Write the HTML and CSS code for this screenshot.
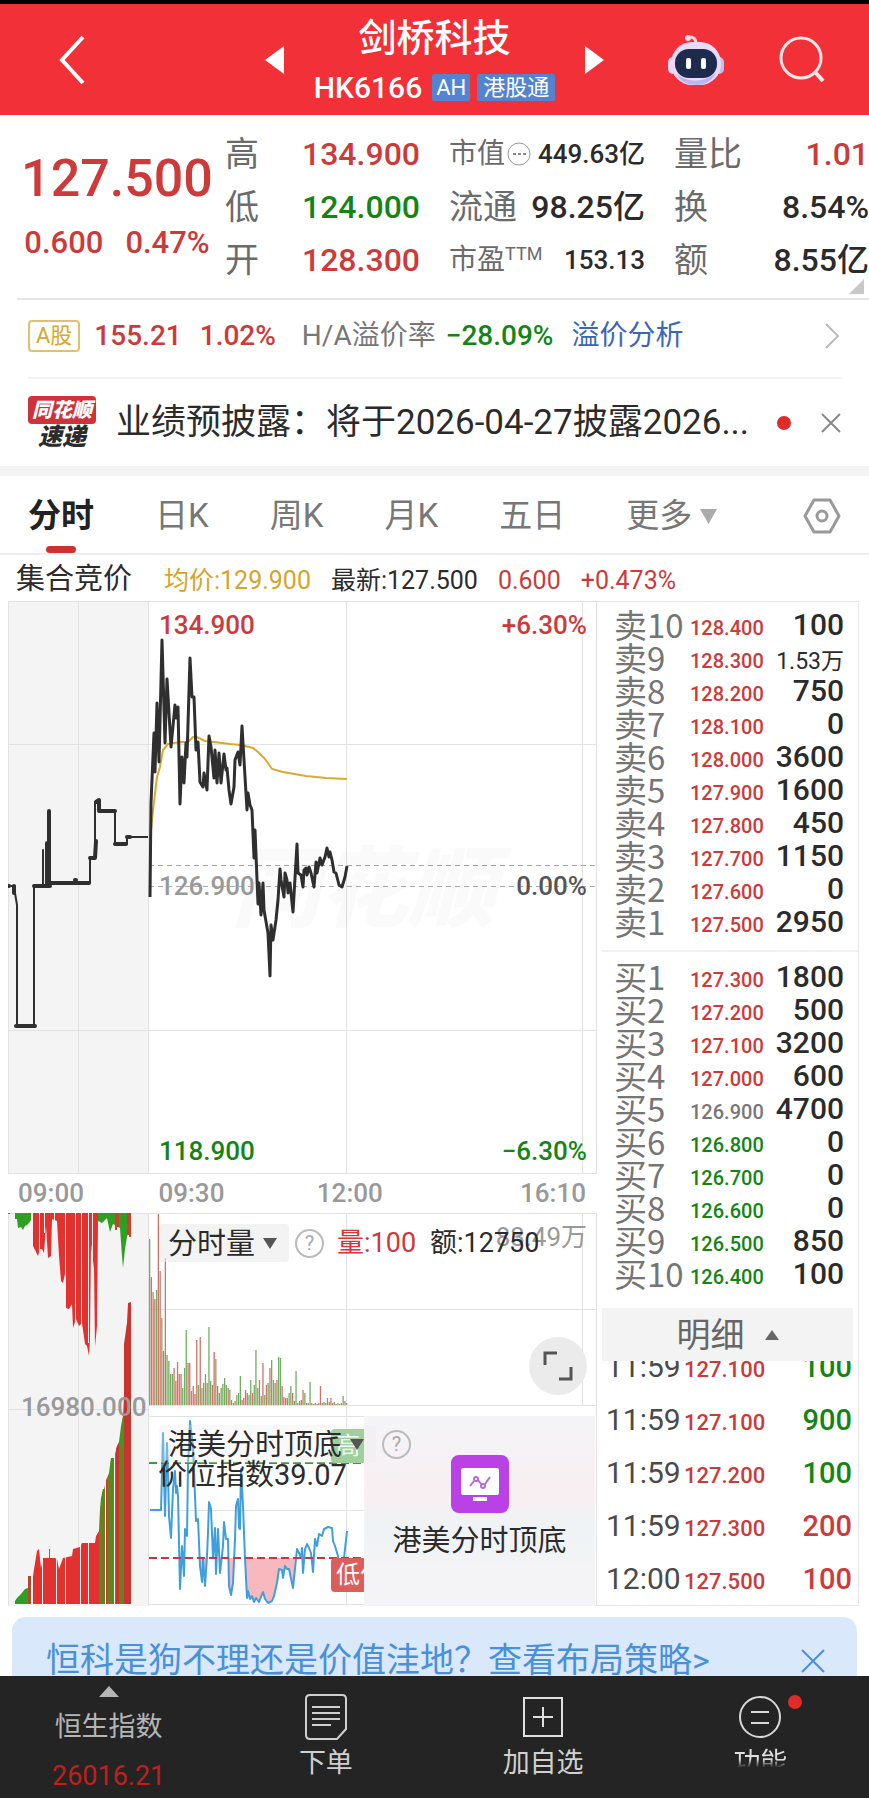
FILE: index.html
```html
<!DOCTYPE html>
<html lang="zh-CN">
<head>
    <meta charset="UTF-8">
    <meta name="viewport" content="width=device-width, initial-scale=1.0">
    <title>剑桥科技 HK6166</title>
    <link rel="stylesheet" href="styles.css">
</head>
<body>
    <header class="topbar">
        <button class="icon-btn back" aria-label="返回">
            <svg width="28" height="50" viewBox="0 0 28 50"><path d="M25 2L4 25l21 23" fill="none" stroke="#fff" stroke-width="4"/></svg>
        </button>
        <div class="switcher">
            <button class="icon-btn" aria-label="上一只"><svg width="19" height="28" viewBox="0 0 19 28"><path d="M19 0v28L0 14z" fill="#fff"/></svg></button>
            <div class="stock">
                <h1>剑桥科技</h1>
                <div class="code"><span>HK6166</span><span class="tag">AH</span><span class="tag tag-wide">港股通</span></div>
            </div>
            <button class="icon-btn" aria-label="下一只"><svg width="19" height="28" viewBox="0 0 19 28"><path d="M0 0v28l19-14z" fill="#fff"/></svg></button>
        </div>
        <div class="top-actions">
            <button class="icon-btn" aria-label="智能助手">
                <svg width="56" height="52" viewBox="0 0 56 52">
                    <path d="M20 3q8-1 8 7" fill="none" stroke="#fbd0dc" stroke-width="3"/>
                    <circle cx="20" cy="4" r="3" fill="#fbd9e2"/>
                    <rect x="0" y="23" width="10" height="17" rx="5" fill="#f3d3ee"/>
                    <rect x="46" y="23" width="10" height="17" rx="5" fill="#c3bdf5"/>
                    <rect x="3" y="8" width="50" height="43" rx="21" fill="#e9daf8"/>
                    <path d="M8 40q20 14 40-1q-6 12-20 12T8 40z" fill="#b9b6f3"/>
                    <rect x="7" y="15" width="42" height="29" rx="14" fill="#1f2b4d"/>
                    <rect x="18" y="24" width="5" height="11" rx="2" fill="#fff"/>
                    <rect x="33" y="24" width="5" height="11" rx="2" fill="#fff"/>
                </svg>
            </button>
            <button class="icon-btn" aria-label="搜索">
                <svg width="46" height="48" viewBox="0 0 46 48"><g fill="none" stroke="#ffe6e6" stroke-width="3"><circle cx="22" cy="22" r="20"/><path d="M37 37l7 8" stroke-width="4"/></g></svg>
            </button>
        </div>
    </header>

    <section class="quote">
        <div class="last up">
            <strong>127.500</strong>
            <div class="change"><span>0.600</span><span>0.47%</span></div>
        </div>
        <dl class="stats">
            <div><dt>高</dt><dd class="up">134.900</dd></div>
            <div><dt>低</dt><dd class="down">124.000</dd></div>
            <div><dt>开</dt><dd class="up">128.300</dd></div>
        </dl>
        <dl class="stats">
            <div class="compact"><dt>市值<svg class="more-dot" width="24" height="24" viewBox="0 0 24 24"><circle cx="12" cy="12" r="11" fill="none" stroke="#999"/><path d="M6 12h3M11 12h3M16 12h3" stroke="#888" stroke-width="2"/></svg></dt><dd>449.63亿</dd></div>
            <div><dt>流通</dt><dd>98.25亿</dd></div>
            <div class="compact"><dt>市盈<sup>TTM</sup></dt><dd>153.13</dd></div>
        </dl>
        <dl class="stats">
            <div><dt>量比</dt><dd class="up">1.01</dd></div>
            <div><dt>换</dt><dd>8.54%</dd></div>
            <div><dt>额</dt><dd>8.55亿</dd></div>
        </dl>
        <span class="corner"></span>
    </section>

    <section class="a-share">
        <span class="a-tag">A股</span>
        <span class="up">155.21</span>
        <span class="up">1.02%</span>
        <span class="premium"><span class="muted">H/A溢价率</span><b class="down">−28.09%</b></span>
        <a href="#premium">溢价分析</a>
        <svg class="push" width="17" height="28" viewBox="0 0 17 28"><path d="M2 2l12 12L2 26" fill="none" stroke="#bbb" stroke-width="2"/></svg>
    </section>

    <section class="news">
        <div class="news-logo"><span>同花顺</span><b>速递</b></div>
        <a href="#news">业绩预披露：将于2026-04-27披露2026...</a>
        <i class="dot"></i>
        <button class="icon-btn" aria-label="关闭公告"><svg width="20" height="20" viewBox="0 0 20 20"><path d="M1 1l18 18M19 1L1 19" stroke="#888" stroke-width="2"/></svg></button>
    </section>

    <nav class="tabs">
        <button class="active">分时</button>
        <button>日K</button>
        <button>周K</button>
        <button>月K</button>
        <button>五日</button>
        <button>更多<svg width="17" height="15" viewBox="0 0 17 15"><path d="M0 0h17L8.500 15z" fill="#aaa"/></svg></button>
        <button class="push" aria-label="设置"><svg width="38" height="36" viewBox="0 0 38 36"><g fill="none" stroke="#999" stroke-width="3"><path d="M11 2h16l9 16-9 16H11L2 18z" stroke-linejoin="round"/><circle cx="19" cy="18" r="5"/></g></svg></button>
    </nav>

    <div class="info">
        <span class="info-title">集合竞价</span>
        <span class="avg">均价:129.900</span>
        <span>最新:127.500</span>
        <span class="up">0.600</span>
        <span class="up">+0.473%</span>
    </div>

    <main class="board">
        <div class="charts">
            <div class="chart">
                <span class="watermark">同花顺</span>
                <svg class="plot" viewBox="0 0 589 573">
                    <rect width="140" height="573" fill="#f4f4f4"/>
                    <path class="grid" d="M.5 0V573M70.500 0V573M140.500 0V573M338.500 0V573M574.500 0V573M588.500 0V573M0 .5H589M0 143.500H589M0 429.500H589M0 572.500H589"/>
                    <path d="M141 264.500H589" stroke="#c79a83" stroke-dasharray="5 4"/>
                    <path d="M141 285.500H589" stroke="#aaa" stroke-dasharray="5 4"/>
                    <path d="M142 239L145 209L149 176L152 166L155 149L160 143L172 141H180L185 136H189L197 140L206 141L222 143L233 144L245 147L250 151L256 157L260 162L264 168L275 171L298 175L318 177L339 178" fill="none" stroke="#dba92e" stroke-width="2"/>
                    <path class="price-line" d="M142 296L143 202L146 132L147 171L149 102L151 161L154 39L157 142L159 78L163 146L167 104L168 117L170 106L172 203L174 156L176 182L178 142L179 156L182 57L184 96H186L188 149L190 141L192 181L195 186L196 172L199 189L201 135L203 146L206 177L207 149L209 182L211 152L213 182L216 153L218 169L219 167L221 189L223 203L226 186L227 159L230 151L232 164L234 125L236 159L239 209L240 192L242 204L244 209L246 257L247 229L250 303L251 282L253 314L255 282L256 309L260 332L262 375L263 324L265 339L268 319L270 299L272 268L273 279L276 296L277 272L279 279L280 292L282 282L285 311L289 243L290 272L293 274L295 286L296 269L298 267L299 274L301 266L303 272L306 286L308 261L309 272L312 257L314 264L317 256L319 247L321 256L322 251L324 259L326 271L328 272L331 284L334 286L337 276L339 265"/>
                    <path class="auction-line" d="M0 285H7V292L9 304V425H26V285H35V249V285H39V242V285H41V210V282H82V257H87V202L91 199V210H107V243H119V236H140"/>
                    <path class="auction-dots" d="M0 285H1M6 285V292M8 425H27M26 285H42M39 242V285M41 210V282H81M67 279H68M82 257H87L88 240M88 201L91 199V210H107M107 243H118M119 236H122"/>
                </svg>
                <span class="lbl top-left up">134.900</span>
                <span class="lbl top-right up">+6.30%</span>
                <span class="lbl mid-left">126.900</span>
                <span class="lbl mid-right">0.00%</span>
                <span class="lbl bottom-left down">118.900</span>
                <span class="lbl bottom-right down">−6.30%</span>
            </div>

            <div class="times"><span>09:00</span><span>09:30</span><span>12:00</span><span>16:10</span></div>

            <div class="chart">
                <svg class="plot" viewBox="0 0 589 393">
                    <rect width="140" height="393" fill="#f4f4f4"/>
                    <path class="grid" d="M.5 0V393M70.500 0V393M140.500 0V393M338.500 0V393M574.500 0V192M588.500 0V393M0 .5H589M140 96.500H589M0 196.500H140M140 192.500H589M140 203.500H356M140 297.500H356M140 391.500H356"/>

                    <path fill="#2f9e22" d="M7 0V6H9L10 15L13 14L15 17L17 13L19 12L21 10L23 7V0z"/>
                    <path fill="#e23230" d="M0 0H2V1H0zM25 0V33L27 37L30 43L32 36V36H34L36 40L38 13L40 45L43 43L44 6L49 8L51 43L53 68L55 70L57 61L58 95L61 96L64 91L65 115L68 106L71 113L74 110L77 131L79 133L81 143L82 126L83 31L86 56L87 134L89 113L90 10V0z"/>
                    <path fill="#2f9e22" d="M90 0V8L94 10L99 5L102 19L105 11L109 13L112 15L114 43L115 55L117 36L120 18V0z"/>
                    <path fill="#c9402f" d="M107 0V17H109V14H111V0zM119 0V22H121V24H123V0z"/>
                    <path fill="#2f9e22" d="M7 391V388L9 385L13 381L17 376L20 375V391z"/>
                    <path fill="#b04a2c" d="M20 391V363H23V391z"/>
                    <path fill="#e23230" d="M25 391V363L27 350L29 338L31 336L33 355L35 345H47L49 346L51 356L55 345L64 343L65 336L72 334L74 330H87L88 323L91 318V391z"/>
                    <path fill="#6b7f22" d="M91 391V318L92 296L93 285L95 276H96L99 265L101 260L103 245H106L109 233L111 229L113 213L115 203L117 160L119 110V391z"/>
                    <path fill="#2f9e22" d="M92 300L95 276V290zM102 260L103 245H106V262zM112 229L115 203V235z"/>
                    <path fill="#c8352f" d="M108 391V236L111 229V391zM98 391V268L99 265V391zM116 391V131L119 110L120 90L123 89V391z"/>
                    <path fill="#47911f" d="M41 345V336H42V345zM104 391V246H106V391z"/>
                    <path stroke="#f4f4f4" d="M31.500 0V42M36.500 0V20M46.500 0V10M57.500 0V96M67.500 0V108M73.500 0V112M80.500 0V130M84.500 0V50M24.500 336V391M34.500 336V391M48.500 336V391M57.500 336V391M72.500 330V391M80.500 330V391M97.500 266V391M106.500 240V391"/>

                    <g id="volume"></g>

                    <clipPath id="below"><rect x="141" y="345" width="215" height="48"/></clipPath>
                    <path id="zone" clip-path="url(#below)" fill="#f7b9bd"/>
                    <path id="index" fill="none" stroke="#3f9fdc" stroke-width="2" stroke-linejoin="round"/>
                    <path d="M141 250H356" stroke="#3f9a3f" stroke-width="2" stroke-dasharray="8 4"/>
                    <path d="M141 345H356" stroke="#c8373c" stroke-width="2" stroke-dasharray="8 4"/>
                </svg>
                <span class="lbl max-vol">83.49万</span>
                <div class="vol-bar">
                    <select class="picker" aria-label="副图指标"><option>分时量</option></select>
                    <button class="help" aria-label="分时量说明">?</button>
                    <span class="up">量:100</span>
                    <span>额:12750</span>
                </div>
                <button class="expand" aria-label="全屏">
                    <svg width="30" height="30" viewBox="0 0 30 30"><path d="M2 14V2h12M28 16v12H16" fill="none" stroke="#555" stroke-width="3"/></svg>
                </button>
                <span class="lbl auction-vol">16980.000</span>
                <span class="mark high">高</span>
                <span class="mark low">低位</span>
                <a class="promo" href="#indicator">
                    <svg width="58" height="58" viewBox="0 0 58 58">
                        <rect width="58" height="58" rx="8" fill="#b941e6"/>
                        <rect x="10" y="13" width="38" height="27" rx="2" fill="#fff"/>
                        <rect x="22" y="42" width="14" height="4" fill="#fff"/>
                        <g fill="none" stroke="#b968dc" stroke-width="2"><path d="M19 31l4-5M27 25l4 5M34 29l5-7"/><circle cx="25" cy="24" r="2"/><circle cx="32" cy="31" r="2"/></g>
                    </svg>
                    港美分时顶底
                </a>
                <div class="index-bar">
                    <select class="picker" aria-label="指标"><option>港美分时顶底</option></select>
                    <button class="help" aria-label="指标说明">?</button>
                </div>
                <span class="index-value">价位指数39.07</span>
            </div>
        </div>

        <aside class="depth">
            <table class="book">
                <tr><th>卖10</th><td class="up">128.400</td><td>100</td></tr>
                <tr><th>卖9</th><td class="up">128.300</td><td class="small">1.53万</td></tr>
                <tr><th>卖8</th><td class="up">128.200</td><td>750</td></tr>
                <tr><th>卖7</th><td class="up">128.100</td><td>0</td></tr>
                <tr><th>卖6</th><td class="up">128.000</td><td>3600</td></tr>
                <tr><th>卖5</th><td class="up">127.900</td><td>1600</td></tr>
                <tr><th>卖4</th><td class="up">127.800</td><td>450</td></tr>
                <tr><th>卖3</th><td class="up">127.700</td><td>1150</td></tr>
                <tr><th>卖2</th><td class="up">127.600</td><td>0</td></tr>
                <tr><th>卖1</th><td class="up">127.500</td><td>2950</td></tr>
            </table>
            <hr>
            <table class="book">
                <tr><th>买1</th><td class="up">127.300</td><td>1800</td></tr>
                <tr><th>买2</th><td class="up">127.200</td><td>500</td></tr>
                <tr><th>买3</th><td class="up">127.100</td><td>3200</td></tr>
                <tr><th>买4</th><td class="up">127.000</td><td>600</td></tr>
                <tr><th>买5</th><td class="muted">126.900</td><td>4700</td></tr>
                <tr><th>买6</th><td class="down">126.800</td><td>0</td></tr>
                <tr><th>买7</th><td class="down">126.700</td><td>0</td></tr>
                <tr><th>买8</th><td class="down">126.600</td><td>0</td></tr>
                <tr><th>买9</th><td class="down">126.500</td><td>850</td></tr>
                <tr><th>买10</th><td class="down">126.400</td><td>100</td></tr>
            </table>
            <button class="detail-btn">明细<svg width="14" height="10" viewBox="0 0 14 10"><path d="M7 0l7 10H0z" fill="#666"/></svg></button>
            <div class="trades">
                <table>
                    <tr><th>11:59</th><td class="up">127.100</td><td class="down">100</td></tr>
                    <tr><th>11:59</th><td class="up">127.100</td><td class="down">900</td></tr>
                    <tr><th>11:59</th><td class="up">127.200</td><td class="down">100</td></tr>
                    <tr><th>11:59</th><td class="up">127.300</td><td class="up">200</td></tr>
                    <tr><th>12:00</th><td class="up">127.500</td><td class="up">100</td></tr>
                </table>
            </div>
        </aside>
    </main>

    <div class="banner">
        <a href="#strategy">恒科是狗不理还是价值洼地？查看布局策略&gt;</a>
        <button class="icon-btn" aria-label="关闭"><svg width="24" height="24" viewBox="0 0 24 24"><path d="M1 1l22 22M23 1L1 23" stroke="#4a90d9" stroke-width="2"/></svg></button>
    </div>

    <footer class="bottombar">
        <a href="#hsi" class="hsi">
            <svg width="20" height="11" viewBox="0 0 20 11"><path d="M10 0l10 11H0z" fill="#b5b5b5"/></svg>
            <span>恒生指数</span>
            <span class="hsi-value">26016.21</span>
        </a>
        <a href="#order">
            <svg width="42" height="46" viewBox="0 0 42 46"><g fill="none" stroke="#d0d0d0" stroke-width="2"><path d="M5 1h32q4 0 4 4v30l-9 10H5q-4 0-4-4V5q0-4 4-4z"/><path d="M7 13h28M7 19h28M7 25h28M7 31h19"/></g></svg>
            <span>下单</span>
        </a>
        <a href="#watch">
            <svg width="42" height="46" viewBox="0 0 42 46"><g fill="none" stroke="#e0e0e0" stroke-width="2"><path d="M2 4h38v38H2zM21 13v20M11 23h20"/></g></svg>
            <span>加自选</span>
        </a>
        <a href="#tools">
            <svg width="42" height="46" viewBox="0 0 42 46"><g fill="none" stroke="#d8d8d8" stroke-width="2"><circle cx="21" cy="23" r="20"/><path d="M12 18h18M12 29h18"/></g></svg>
            <span class="faded">功能</span>
            <i class="dot badge"></i>
        </a>
    </footer>

    <script src="script.js"></script>
</body>
</html>
```

FILE: styles.css
```css
* {
    box-sizing: border-box;
}

body {
    margin: 0;
    min-height: 100vh;
    display: flex;
    flex-direction: column;
    background-color: #fff;
    color: #2b2b2b;
    font-family: Roboto, "Noto Sans CJK SC", sans-serif;
    font-size: 26px;
    line-height: 40px;
    overflow-x: hidden;
}

button,
select {
    font: inherit;
    color: inherit;
    border: none;
    background: none;
    padding: 0;
    cursor: pointer;
}

a {
    color: inherit;
    text-decoration: none;
}

svg {
    display: block;
    flex: none;
}

.up {
    color: #cc3a3a;
}

.down {
    color: #148514;
}

.muted {
    color: #777;
}

.push {
    margin-left: auto;
}

.dot {
    width: 14px;
    height: 14px;
    border-radius: 50%;
    background-color: #e02b2b;
}

/* Header */
.topbar {
    display: grid;
    grid-template-columns: 1fr auto 1fr;
    align-items: center;
    height: 115px;
    padding: 0 44px;
    border-top: 4px solid #000;
    background-color: #f13038;
    color: #fff;
}

.back {
    justify-self: start;
    margin-left: 14px;
}

.switcher {
    display: flex;
    align-items: center;
    gap: 30px;
}

.stock h1 {
    margin: 0;
    font-size: 38px;
    line-height: 56px;
    font-weight: 500;
    text-align: center;
}

.code {
    display: flex;
    align-items: center;
    gap: 7px;
    height: 44px;
    font-size: 30px;
    font-weight: 500;
}

.tag {
    margin-left: 3px;
    padding: 0 4px;
    border-radius: 2px;
    background-color: #5484cf;
    font-size: 22px;
    line-height: 27px;
    font-weight: 400;
}

.tag-wide {
    margin-left: 0;
    padding: 0 6px;
}

.top-actions {
    display: flex;
    justify-content: flex-end;
    align-items: center;
    gap: 55px;
}

/* Quote */
.quote {
    position: relative;
    display: grid;
    grid-template-columns: 208fr 224fr 225fr 195fr;
    height: 185px;
    margin-left: 17px;
    padding-top: 12px;
    border-bottom: 2px solid #e6e6e6;
}

.last {
    display: flex;
    flex-direction: column;
    align-items: center;
    padding: 20px 8px 0 0;
}

.last strong {
    font-size: 52px;
    line-height: 64px;
    font-weight: 500;
}

.change {
    display: flex;
    gap: 22px;
    font-size: 31px;
    line-height: 64px;
    font-weight: 500;
}

.stats {
    margin: 0 29px 0 0;
    font-size: 32px;
}

.stats:last-of-type {
    margin-right: 0;
}

.stats div {
    display: flex;
    align-items: center;
    justify-content: space-between;
    height: 53px;
    white-space: nowrap;
}

.stats dt {
    display: flex;
    align-items: center;
    color: #6b6b6b;
    font-size: 34px;
}

.stats dd {
    margin: 0;
    font-weight: 500;
}

.stats .compact {
    font-size: 26px;
}

.compact dt {
    font-size: 28px;
}

.compact sup {
    font-size: 18px;
    line-height: 20px;
    margin-bottom: 12px;
}

.more-dot {
    margin-left: 2px;
}

.corner {
    position: absolute;
    right: 5px;
    bottom: 4px;
    border-left: 15px solid transparent;
    border-bottom: 15px solid #c8c8c8;
}

/* A share row */
.a-share {
    display: flex;
    align-items: center;
    gap: 18px;
    height: 79px;
    margin: 0 28px;
    padding-bottom: 6px;
    border-bottom: 2px solid #f3f3f3;
    font-size: 28px;
}

.a-share .up,
.a-share .down {
    font-weight: 500;
}

.a-tag {
    margin-right: -4px;
    padding: 0 6px;
    border: 2px solid #e0c070;
    border-radius: 4px;
    color: #d9a62b;
    font-size: 22px;
    line-height: 28px;
}

.premium {
    display: flex;
    gap: 10px;
    margin-left: 8px;
}

.a-share a {
    color: #3c66b4;
}

/* News */
.news {
    display: flex;
    align-items: center;
    gap: 20px;
    height: 97px;
    padding: 0 28px;
    border-bottom: 10px solid #f3f3f3;
}

.news a {
    flex: 1;
    overflow: hidden;
    white-space: nowrap;
    text-overflow: ellipsis;
    font-size: 35px;
}

.news .dot {
    margin-right: 10px;
}

.news-logo {
    width: 68px;
    text-align: center;
    font-style: italic;
    font-weight: 900;
    font-size: 24px;
    line-height: 26px;
}

.news-logo span {
    display: block;
    border-radius: 4px;
    background-color: #cf3238;
    color: #fff;
    font-size: 20px;
    line-height: 28px;
}

/* Period tabs */
.tabs {
    display: flex;
    align-items: center;
    gap: 61px;
    height: 79px;
    padding: 0 28px;
    border-bottom: 2px solid #ededed;
    color: #777;
    font-size: 33px;
}

.tabs button {
    position: relative;
    display: flex;
    align-items: center;
    gap: 8px;
    height: 77px;
    padding-top: 3px;
    white-space: nowrap;
}

.tabs .active {
    color: #222;
    font-weight: 700;
}

.tabs .active::after {
    content: "";
    position: absolute;
    left: 50%;
    bottom: 0;
    width: 30px;
    height: 7px;
    margin-left: -15px;
    border-radius: 4px;
    background-color: #cc3330;
}

.info {
    display: flex;
    align-items: baseline;
    gap: 20px;
    height: 46px;
    padding: 0 16px;
    font-size: 25px;
    line-height: 48px;
}

.info-title {
    margin-right: 12px;
    font-size: 29px;
}

.avg {
    color: #d6a42a;
}

/* Charts */
.board {
    display: grid;
    grid-template-columns: 589fr 262fr;
    padding: 0 10px 0 8px;
}

.charts {
    min-width: 0;
}

.chart {
    position: relative;
}

.plot {
    position: relative;
    width: 100%;
    height: auto;
}

.grid {
    fill: none;
    stroke: #e2e2e2;
}

.price-line,
.auction-line,
.auction-dots {
    fill: none;
    stroke: #2f2f2f;
    stroke-width: 3;
    stroke-linejoin: round;
}

.auction-line {
    stroke-width: 2;
}

.auction-dots {
    stroke-width: 4;
    stroke-linecap: round;
}

.watermark {
    position: absolute;
    z-index: 1;
    left: 38%;
    top: 234px;
    color: rgba(0, 0, 0, 0.02);
    font-size: 88px;
    line-height: 110px;
    font-weight: 900;
    font-style: italic;
}

.lbl {
    position: absolute;
    line-height: 30px;
    font-weight: 500;
}

.top-left {
    left: 151px;
    top: 9px;
}

.top-right {
    right: 10px;
    top: 9px;
}

.mid-left {
    left: 151px;
    top: 50%;
    margin-top: -17px;
    color: #999;
}

.mid-right {
    right: 10px;
    top: 50%;
    margin-top: -17px;
    color: #555;
}

.bottom-left {
    left: 151px;
    bottom: 8px;
}

.bottom-right {
    right: 10px;
    bottom: 8px;
}

.times {
    display: grid;
    grid-template-columns: 141fr 159fr 204fr 64fr;
    padding: 0 11px 0 10px;
    line-height: 39px;
    font-weight: 500;
    color: #999;
}

.times span:last-child {
    justify-self: end;
}

.vol-bar {
    position: absolute;
    left: 151px;
    top: 10px;
    display: flex;
    align-items: center;
    gap: 14px;
    white-space: nowrap;
    font-size: 27px;
}

.vol-bar .help {
    margin: 0 -1px 0 -8px;
}

.picker {
    height: 38px;
    padding: 0 33px 0 9px;
    border-radius: 4px;
    appearance: none;
    background: rgba(235, 235, 235, 0.6) url("data:image/svg+xml,%3Csvg xmlns='http://www.w3.org/2000/svg' width='14' height='11'%3E%3Cpath d='M0 0h14L7 11z' fill='%23555'/%3E%3C/svg%3E") no-repeat right 12px center;
    font-size: 29px;
}

.help {
    width: 29px;
    height: 29px;
    border: 2px solid #bbb;
    border-radius: 50%;
    color: #aaa;
    font-size: 20px;
    line-height: 25px;
}

.max-vol {
    right: 10px;
    top: 9px;
    font-weight: 400;
    color: #999;
}

.expand {
    position: absolute;
    right: 10px;
    top: 124px;
    display: grid;
    place-items: center;
    width: 58px;
    height: 58px;
    border-radius: 50%;
    background-color: #ebebeb;
}

.auction-vol {
    left: 13px;
    top: 179px;
    color: #999;
}

.mark {
    position: absolute;
    left: 323px;
    width: 34px;
    padding-left: 5px;
    overflow: hidden;
    border-radius: 4px 0 0 4px;
    white-space: nowrap;
    color: #fff;
    font-size: 24px;
    line-height: 34px;
}

.high {
    top: 216px;
    background-color: #7cc47c;
}

.low {
    top: 345px;
    background-color: #dd5c5c;
}

.promo {
    position: absolute;
    left: 356px;
    right: 2px;
    top: 203px;
    bottom: 0;
    display: flex;
    flex-direction: column;
    align-items: center;
    gap: 8px;
    padding-top: 39px;
    background: linear-gradient(#f4f4f7, #f8eff2 42%, #eff3f5 58%, #f4f3f6 80%);
    font-size: 29px;
}

.index-bar {
    position: absolute;
    left: 151px;
    top: 212px;
    display: flex;
    align-items: center;
    gap: 6px;
}

.index-bar .picker {
    background-color: rgba(235, 235, 235, 0.3);
}

.index-value {
    position: absolute;
    left: 150px;
    top: 242px;
    font-size: 29px;
    line-height: 40px;
}

/* Order book */
.depth {
    display: flex;
    flex-direction: column;
    min-width: 0;
    padding: 6px 0 0 5px;
    border: 1px solid #e6e6e6;
    border-left: none;
}

.depth table {
    width: 100%;
    border-collapse: collapse;
    table-layout: fixed;
}

.depth th,
.depth td {
    padding: 0;
    white-space: nowrap;
}

.depth th {
    text-align: left;
    font-weight: 400;
}

.depth td:last-child {
    text-align: right;
}

.book th {
    width: 88px;
    padding-left: 12px;
    color: #757575;
    font-family: "Noto Sans CJK SC", sans-serif;
    font-size: 33px;
    line-height: 33px;
}

.book td {
    font-size: 20px;
    line-height: 33px;
}

.book td:nth-child(2) {
    padding-top: 8px;
    font-weight: 500;
    line-height: 25px;
}

.book td:last-child {
    padding-right: 14px;
    font-size: 30px;
    font-weight: 500;
}

.book td.small:last-child {
    padding-top: 8px;
    font-size: 23px;
    font-weight: 400;
    line-height: 25px;
}

.depth hr {
    width: 100%;
    margin: 12px 0 8px;
    border: none;
    border-top: 2px solid #f0f0f0;
}

.detail-btn {
    display: flex;
    align-items: center;
    justify-content: center;
    gap: 20px;
    height: 53px;
    margin: 18px 5px 0 0;
    background-color: #f3f3f3;
    color: #666;
    font-size: 34px;
}

.trades {
    flex: 1 0 0;
    display: flex;
    flex-direction: column;
    justify-content: flex-end;
    overflow: hidden;
}

.trades tr {
    height: 53px;
}

.trades th {
    width: 82px;
    padding-left: 4px;
    color: #4a4a4a;
    font-size: 30px;
}

.trades td {
    font-size: 22px;
    font-weight: 500;
}

.trades td:nth-child(2) {
    padding-top: 6px;
}

.trades td:last-child {
    padding-right: 6px;
    font-size: 29px;
}

/* Banner */
.banner {
    display: flex;
    align-items: center;
    justify-content: space-between;
    height: 59px;
    margin: 11px 12px 0;
    padding: 28px 32px 0 34px;
    overflow: hidden;
    border-radius: 14px 14px 0 0;
    background-color: #d9e8fb;
    color: #4a90d9;
    font-size: 34px;
    line-height: 31px;
    white-space: nowrap;
}

/* Bottom bar */
.bottombar {
    flex: 1;
    display: grid;
    grid-template-columns: repeat(4, 1fr);
    background-color: #242424;
    color: #d0d0d0;
}

.bottombar a {
    position: relative;
    display: flex;
    flex-direction: column;
    align-items: center;
    gap: 4px;
    padding-top: 18px;
    line-height: 38px;
    font-size: 27px;
}

.bottombar .hsi {
    gap: 11px;
    padding-top: 10px;
    color: #b5b5b5;
}

.hsi-value {
    color: #c01f1f;
}

.faded {
    background: linear-gradient(#e0e0e0 40%, #242424 62%);
    background-clip: text;
    color: transparent;
}

.badge {
    position: absolute;
    left: 50%;
    top: 19px;
    margin-left: 28px;
}
```

FILE: script.js
```js
// minute volume, bar height in px and colour
var heights = [166, 128, 113, 106, 115, 191, 134, 87, 54, 147, 50, 44, 31, 31, 37, 24, 43, 31, 31, 17, 37, 75, 42, 42, 14, 19, 11, 65, 20, 68, 17, 22, 31, 22, 78, 24, 20, 53, 46, 19, 12, 17, 21, 27, 20, 17, 15, 5, 2, 4, 10, 12, 29, 5, 7, 15, 12, 10, 25, 12, 20, 55, 17, 25, 9, 42, 10, 20, 22, 37, 45, 25, 22, 25, 48, 47, 19, 8, 7, 7, 12, 19, 12, 4, 34, 2, 4, 5, 15, 12, 2, 2, 23, 2, 1, 2, 1, 2, 19, 2, 3, 2, 7, 3, 7, 2, 3, 1, 2, 1, 2, 9, 4, 2];
var colors = 'grrrgrrgrrggggrrrrrggg' + 'rrgrrrgrgggrggrrgrgggggrgrgrgggrrrrggrgggrgrgrgrgggrggrrrrggrgggrrrggrgrrrrgrrgggrrrgrgrrgr';
var volume = document.getElementById('volume');
var step = 197 / (heights.length - 1);

heights.forEach(function (h, i) {
    var bar = document.createElementNS('http://www.w3.org/2000/svg', 'rect');
    bar.setAttribute('x', (141 + i * step).toFixed(1));
    bar.setAttribute('y', 192 - h);
    bar.setAttribute('width', 1.3);
    bar.setAttribute('height', h);
    bar.setAttribute('fill', colors[i % colors.length] === 'r' ? '#cf7468' : '#74ad62');
    volume.appendChild(bar);
});

// price position index
var points = '142 297L153 297L155 220L157 303L159 230L160 260L161 303L163 325L165 276L167 258L168 280L169 273L170 283L172 376L174 333L176 363L177 316L179 323L180 253L182 208L185 233L188 308L190 306L192 353L194 369L195 346L197 373L199 343L200 320L201 289L203 296L205 345L207 315L208 361L210 316L212 360L215 333L216 309L218 326L220 326L221 373L223 382L225 370L227 326L228 293L230 286L231 315L232 316L233 256L235 293L237 345L239 385L240 378L242 386L244 383L246 389L248 385L251 389L253 384L255 379L257 386L260 390L264 388L266 383L269 370L271 356L274 357L275 365L277 353L279 356L281 356L285 375L287 356L289 336L291 340L293 345L294 335L295 360L297 336L299 331L301 335L303 340L305 359L307 326L309 333L311 321L314 323L316 316L320 314L324 315L325 328L327 333L330 343L332 366L335 366L336 345L339 318';
document.getElementById('index').setAttribute('d', 'M' + points);
document.getElementById('zone').setAttribute('d', 'M142 345L' + points + 'V345z');
```
